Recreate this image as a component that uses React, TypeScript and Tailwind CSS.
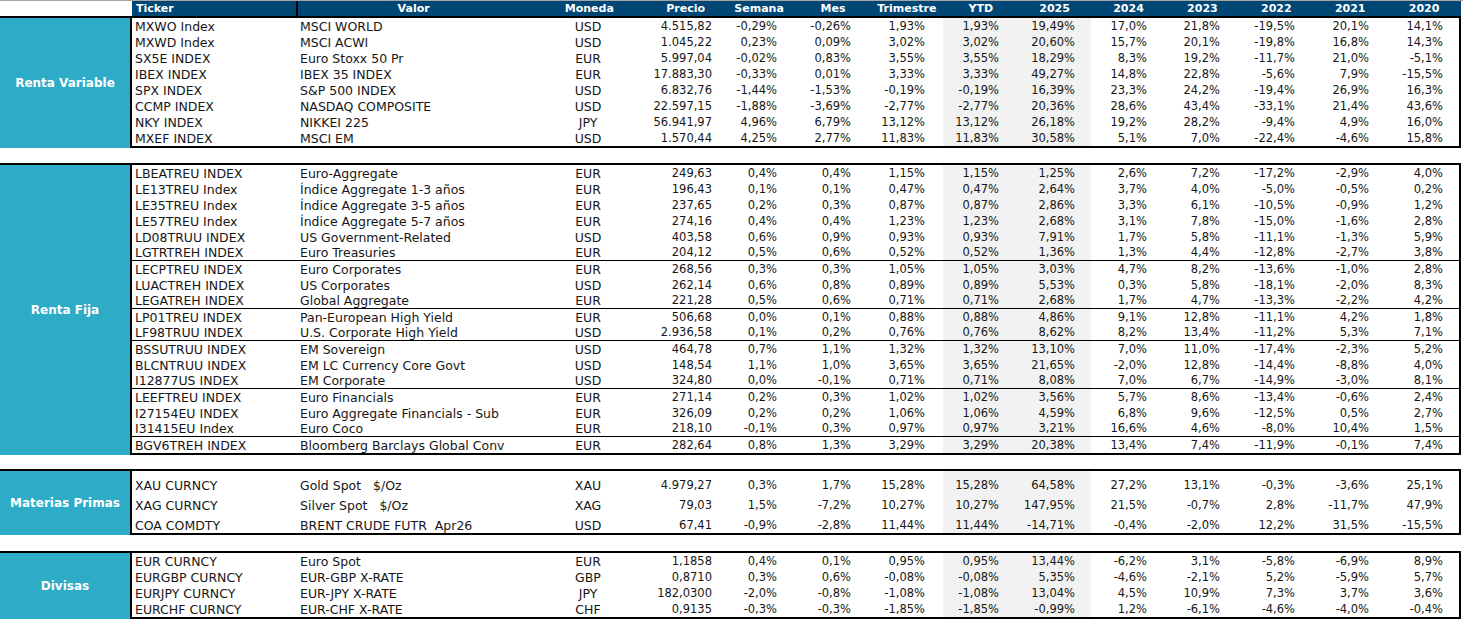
import React from "react";

type Row = string[];
type Section = { label: string; rows: Row[]; seps?: number[]; tall?: boolean };

const rentaVariable: Row[] = [
  ["MXWO Index", "MSCI WORLD", "USD", "4.515,82", "-0,29%", "-0,26%", "1,93%", "1,93%", "19,49%", "17,0%", "21,8%", "-19,5%", "20,1%", "14,1%"],
  ["MXWD Index", "MSCI ACWI", "USD", "1.045,22", "0,23%", "0,09%", "3,02%", "3,02%", "20,60%", "15,7%", "20,1%", "-19,8%", "16,8%", "14,3%"],
  ["SX5E INDEX", "Euro Stoxx 50 Pr", "EUR", "5.997,04", "-0,02%", "0,83%", "3,55%", "3,55%", "18,29%", "8,3%", "19,2%", "-11,7%", "21,0%", "-5,1%"],
  ["IBEX INDEX", "IBEX 35 INDEX", "EUR", "17.883,30", "-0,33%", "0,01%", "3,33%", "3,33%", "49,27%", "14,8%", "22,8%", "-5,6%", "7,9%", "-15,5%"],
  ["SPX INDEX", "S&P 500 INDEX", "USD", "6.832,76", "-1,44%", "-1,53%", "-0,19%", "-0,19%", "16,39%", "23,3%", "24,2%", "-19,4%", "26,9%", "16,3%"],
  ["CCMP INDEX", "NASDAQ COMPOSITE", "USD", "22.597,15", "-1,88%", "-3,69%", "-2,77%", "-2,77%", "20,36%", "28,6%", "43,4%", "-33,1%", "21,4%", "43,6%"],
  ["NKY INDEX", "NIKKEI 225", "JPY", "56.941,97", "4,96%", "6,79%", "13,12%", "13,12%", "26,18%", "19,2%", "28,2%", "-9,4%", "4,9%", "16,0%"],
  ["MXEF INDEX", "MSCI EM", "USD", "1.570,44", "4,25%", "2,77%", "11,83%", "11,83%", "30,58%", "5,1%", "7,0%", "-22,4%", "-4,6%", "15,8%"],
];

const rentaFija: Row[] = [
  ["LBEATREU INDEX", "Euro-Aggregate", "EUR", "249,63", "0,4%", "0,4%", "1,15%", "1,15%", "1,25%", "2,6%", "7,2%", "-17,2%", "-2,9%", "4,0%"],
  ["LE13TREU Index", "Índice Aggregate 1-3 años", "EUR", "196,43", "0,1%", "0,1%", "0,47%", "0,47%", "2,64%", "3,7%", "4,0%", "-5,0%", "-0,5%", "0,2%"],
  ["LE35TREU Index", "Índice Aggregate 3-5 años", "EUR", "237,65", "0,2%", "0,3%", "0,87%", "0,87%", "2,86%", "3,3%", "6,1%", "-10,5%", "-0,9%", "1,2%"],
  ["LE57TREU Index", "Índice Aggregate 5-7 años", "EUR", "274,16", "0,4%", "0,4%", "1,23%", "1,23%", "2,68%", "3,1%", "7,8%", "-15,0%", "-1,6%", "2,8%"],
  ["LD08TRUU INDEX", "US Government-Related", "USD", "403,58", "0,6%", "0,9%", "0,93%", "0,93%", "7,91%", "1,7%", "5,8%", "-11,1%", "-1,3%", "5,9%"],
  ["LGTRTREH INDEX", "Euro Treasuries", "EUR", "204,12", "0,5%", "0,6%", "0,52%", "0,52%", "1,36%", "1,3%", "4,4%", "-12,8%", "-2,7%", "3,8%"],
  ["LECPTREU INDEX", "Euro Corporates", "EUR", "268,56", "0,3%", "0,3%", "1,05%", "1,05%", "3,03%", "4,7%", "8,2%", "-13,6%", "-1,0%", "2,8%"],
  ["LUACTREH INDEX", "US Corporates", "USD", "262,14", "0,6%", "0,8%", "0,89%", "0,89%", "5,53%", "0,3%", "5,8%", "-18,1%", "-2,0%", "8,3%"],
  ["LEGATREH INDEX", "Global Aggregate", "EUR", "221,28", "0,5%", "0,6%", "0,71%", "0,71%", "2,68%", "1,7%", "4,7%", "-13,3%", "-2,2%", "4,2%"],
  ["LP01TREU INDEX", "Pan-European High Yield", "EUR", "506,68", "0,0%", "0,1%", "0,88%", "0,88%", "4,86%", "9,1%", "12,8%", "-11,1%", "4,2%", "1,8%"],
  ["LF98TRUU INDEX", "U.S. Corporate High Yield", "USD", "2.936,58", "0,1%", "0,2%", "0,76%", "0,76%", "8,62%", "8,2%", "13,4%", "-11,2%", "5,3%", "7,1%"],
  ["BSSUTRUU INDEX", "EM Sovereign", "USD", "464,78", "0,7%", "1,1%", "1,32%", "1,32%", "13,10%", "7,0%", "11,0%", "-17,4%", "-2,3%", "5,2%"],
  ["BLCNTRUU INDEX", "EM LC Currency Core Govt", "USD", "148,54", "1,1%", "1,0%", "3,65%", "3,65%", "21,65%", "-2,0%", "12,8%", "-14,4%", "-8,8%", "4,0%"],
  ["I12877US INDEX", "EM Corporate", "USD", "324,80", "0,0%", "-0,1%", "0,71%", "0,71%", "8,08%", "7,0%", "6,7%", "-14,9%", "-3,0%", "8,1%"],
  ["LEEFTREU INDEX", "Euro Financials", "EUR", "271,14", "0,2%", "0,3%", "1,02%", "1,02%", "3,56%", "5,7%", "8,6%", "-13,4%", "-0,6%", "2,4%"],
  ["I27154EU INDEX", "Euro Aggregate Financials - Sub", "EUR", "326,09", "0,2%", "0,2%", "1,06%", "1,06%", "4,59%", "6,8%", "9,6%", "-12,5%", "0,5%", "2,7%"],
  ["I31415EU Index", "Euro Coco", "EUR", "218,10", "-0,1%", "0,3%", "0,97%", "0,97%", "3,21%", "16,6%", "4,6%", "-8,0%", "10,4%", "1,5%"],
  ["BGV6TREH INDEX", "Bloomberg Barclays Global Conv", "EUR", "282,64", "0,8%", "1,3%", "3,29%", "3,29%", "20,38%", "13,4%", "7,4%", "-11,9%", "-0,1%", "7,4%"],
];

const materias: Row[] = [
  ["XAU CURNCY", "Gold Spot   $/Oz", "XAU", "4.979,27", "0,3%", "1,7%", "15,28%", "15,28%", "64,58%", "27,2%", "13,1%", "-0,3%", "-3,6%", "25,1%"],
  ["XAG CURNCY", "Silver Spot   $/Oz", "XAG", "79,03", "1,5%", "-7,2%", "10,27%", "10,27%", "147,95%", "21,5%", "-0,7%", "2,8%", "-11,7%", "47,9%"],
  ["COA COMDTY", "BRENT CRUDE FUTR  Apr26", "USD", "67,41", "-0,9%", "-2,8%", "11,44%", "11,44%", "-14,71%", "-0,4%", "-2,0%", "12,2%", "31,5%", "-15,5%"],
];

const divisas: Row[] = [
  ["EUR CURNCY", "Euro Spot", "EUR", "1,1858", "0,4%", "0,1%", "0,95%", "0,95%", "13,44%", "-6,2%", "3,1%", "-5,8%", "-6,9%", "8,9%"],
  ["EURGBP CURNCY", "EUR-GBP X-RATE", "GBP", "0,8710", "0,3%", "0,6%", "-0,08%", "-0,08%", "5,35%", "-4,6%", "-2,1%", "5,2%", "-5,9%", "5,7%"],
  ["EURJPY CURNCY", "EUR-JPY X-RATE", "JPY", "182,0300", "-2,0%", "-0,8%", "-1,08%", "-1,08%", "13,04%", "4,5%", "10,9%", "7,3%", "3,7%", "3,6%"],
  ["EURCHF CURNCY", "EUR-CHF X-RATE", "CHF", "0,9135", "-0,3%", "-0,3%", "-1,85%", "-1,85%", "-0,99%", "1,2%", "-6,1%", "-4,6%", "-4,0%", "-0,4%"],
];

const sections: Section[] = [
  { label: "Renta Variable", rows: rentaVariable },
  { label: "Renta Fija", rows: rentaFija, seps: [5, 8, 10, 13, 16] },
  { label: "Materias Primas", rows: materias, tall: true },
  { label: "Divisas", rows: divisas },
];

// data columns, left to right (x = 132 .. 1459)
const cells = [
  "w-[164px] pl-[3px] justify-start",
  "w-[232px] pl-[4px] justify-start whitespace-pre",
  "w-[120px] justify-center",
  "w-[73px] pr-[9px] justify-end",
  "w-[74px] pr-[18px] justify-end",
  "w-[74px] pr-[18px] justify-end",
  "w-[74px] pr-[18px] justify-end",
  "w-[74px] pr-[18px] justify-end bg-[#f2f2f2]",
  "w-[74px] pr-[16px] justify-end bg-[#f2f2f2]",
  "w-[74px] pr-[18px] justify-end",
  "w-[74px] pr-[19px] justify-end",
  "w-[74px] pr-[18px] justify-end",
  "w-[74px] pr-[18px] justify-end",
  "w-[72px] pr-[16px] justify-end",
];

const headers = ["Moneda", "Precio", "Semana", "Mes", "Trimestre", "YTD", "2025", "2024", "2023", "2022", "2021", "2020"];
const headerW = ["w-[120px]", "w-[73px]", "w-[74px]", "w-[74px]", "w-[74px]", "w-[74px]", "w-[74px]", "w-[74px]", "w-[74px]", "w-[74px]", "w-[74px]", "w-[74px]"];

function DataRow({ row, sep, h }: { row: Row; sep: boolean; h: string }) {
  return (
    <div className={`flex ${h} ${sep ? "border-b border-black" : ""}`}>
      {row.map((v, i) => (
        <div key={i} className={`${cells[i]} shrink-0 flex items-end overflow-hidden whitespace-nowrap`}>
          <span className={`leading-[15px] ${i < 3 ? "text-[12.5px]" : "text-[11.5px]"}`}>{v}</span>
        </div>
      ))}
    </div>
  );
}

function Block({ s }: { s: Section }) {
  return (
    <div className="flex border-t-2 border-black w-[1461px]">
      <div className="w-[130px] shrink-0 bg-[#2eabc6] flex items-center justify-center text-white font-bold text-[12px]">
        {s.label}
      </div>
      <div className="w-[1331px] border-l-2 border-r-2 border-b-2 border-black">
        {s.rows.map((r, i) => (
          <DataRow
            key={i}
            row={r}
            sep={!!s.seps?.includes(i)}
            h={s.tall ? (i === 0 ? "h-[22px]" : "h-[20px]") : "h-[16px]"}
          />
        ))}
      </div>
    </div>
  );
}

export default function App() {
  return (
    <div className="w-[1463px] h-[620px] bg-white border-t border-[#a6a6a6] text-[#161616] font-['DejaVu_Sans',sans-serif] overflow-hidden">
      <div className="flex h-[15px]">
        <div className="w-[132px] shrink-0" />
        <div className="flex w-[1329px] bg-[#004776] text-white font-bold text-[11px] leading-[15px]">
          <div className="w-[164px] pl-[4px]">Ticker</div>
          <div className="w-[234px] border-l-2 border-black text-center">Valor</div>
          {headers.map((h, i) => (
            <div key={h} className={`${headerW[i]} text-center`}>{h}</div>
          ))}
        </div>
      </div>
      <div className="flex flex-col">
        <Block s={sections[0]} />
        <div className="h-[15px]" />
        <Block s={sections[1]} />
        <div className="h-[14px]" />
        <Block s={sections[2]} />
        <div className="h-[16px]" />
        <Block s={sections[3]} />
      </div>
    </div>
  );
}
